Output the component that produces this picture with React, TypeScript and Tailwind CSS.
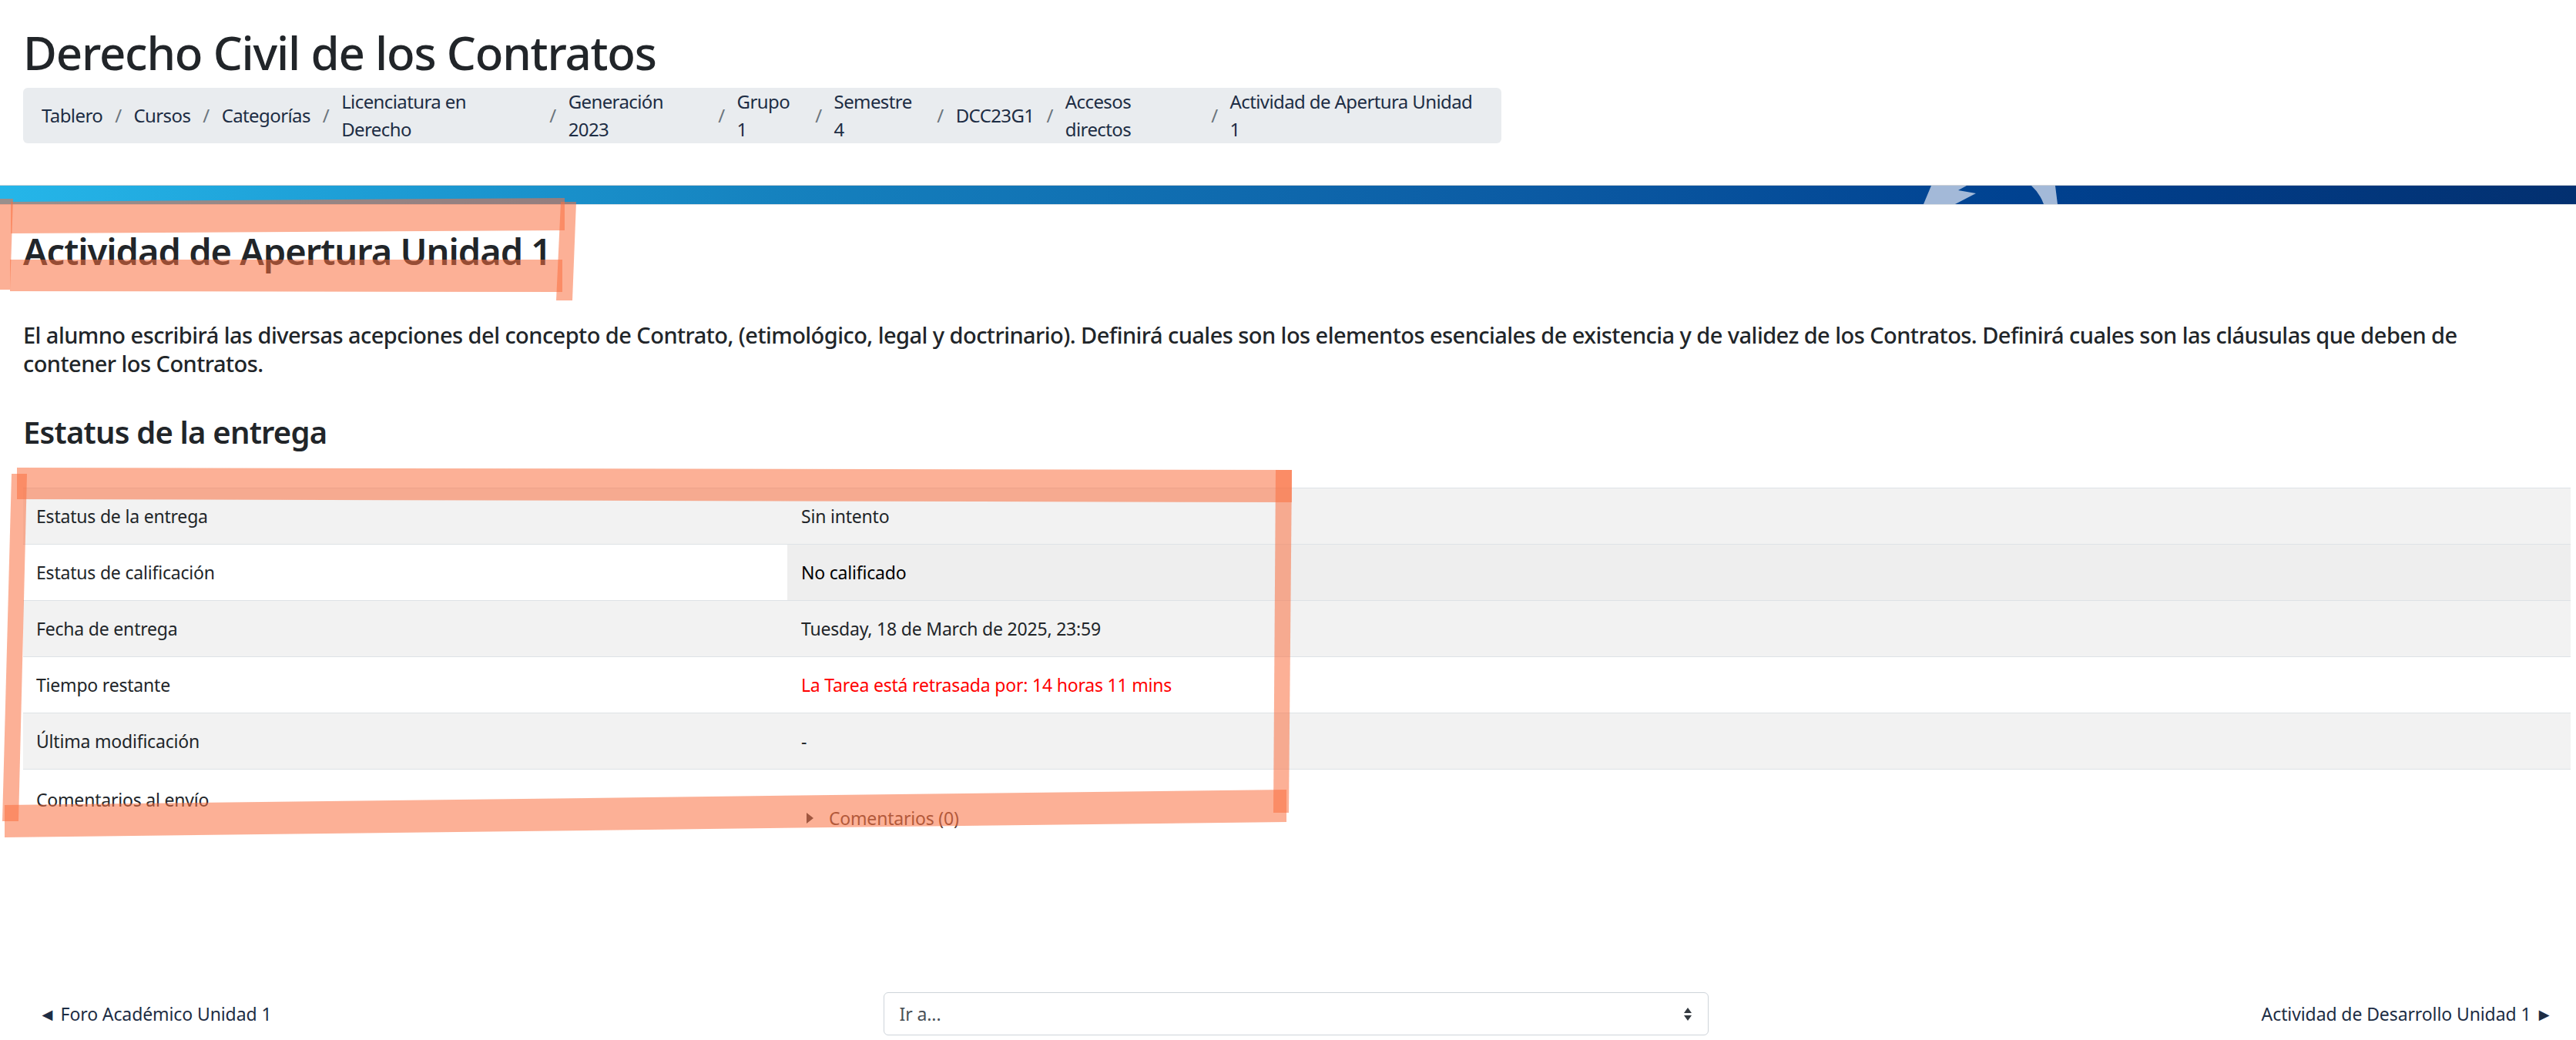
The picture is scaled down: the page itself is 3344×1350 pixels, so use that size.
const font = "font-['Noto_Sans','Open_Sans',sans-serif]";

const crumbs = [
  "Tablero",
  "Cursos",
  "Categorías",
  "Licenciatura en Derecho",
  "Generación 2023",
  "Grupo 1",
  "Semestre 4",
  "DCC23G1",
  "Accesos directos",
  "Actividad de Apertura Unidad 1",
];

const rows = [
  { label: "Estatus de la entrega", value: "Sin intento", striped: true },
  { label: "Estatus de calificación", value: "No calificado", shaded: true },
  { label: "Fecha de entrega", value: "Tuesday, 18 de March de 2025, 23:59", striped: true },
  { label: "Tiempo restante", value: "La Tarea está retrasada por: 14 horas 11 mins", late: true },
  { label: "Última modificación", value: "-", striped: true },
];

// hand drawn highlight marks lying over the page
const marks = [
  "14,262 733,257 733,299 14,303",
  "0,258 17,258 13,376 0,376",
  "728,262 748,262 743,390 722,390",
  "13,337 730,337 730,379 13,378",
  "22,607 1677,610 1677,652 22,648",
  "15,615 35,615 24,1066 3,1066",
  "6,1045 1670,1025 1670,1067 6,1087",
  "1656,610 1677,610 1673,1055 1653,1055",
];

export default function App() {
  return (
    <div className={`relative h-[1350px] overflow-hidden bg-white text-[#212529] ${font}`}>
      <header className="px-[30px] pt-[33px]">
        <h1 className="text-[60px] leading-[70px] font-medium tracking-[-1.2px]">Derecho Civil de los Contratos</h1>
        <nav className="mt-[11px] flex h-[72px] w-[1919px] items-center gap-[16px] rounded-[6px] bg-[#e9ecef] px-[24px] text-[24px] tracking-[-0.6px] text-[#1d2d44]">
          {crumbs.map((c, i) => (
            <span key={c} className="flex items-center gap-[16px]">
              {i > 0 && <span className="text-[#6c757d]">/</span>}
              {c}
            </span>
          ))}
        </nav>
      </header>

      <div className="relative mt-[54px] h-[26px] border-y border-t-[#cfd4d8] border-b-[#dee2e6] bg-[linear-gradient(90deg,#25b6e9_0%,#1582bf_30%,#0b5aa3_60%,#004291_78%,#033070_100%)]">
        <svg className="absolute top-0 left-[2470px]" width="220" height="24" viewBox="0 0 220 24">
          <path d="M37 0H83L72 6L95 10L68 24H27Z" fill="#a3b9d8" />
          <path d="M167 0H198L201 24H183Q178 10 167 0Z" fill="#a3b9d8" />
        </svg>
      </div>

      <main className="px-[30px]">
        <h2 className="mt-[32px] text-[47px] leading-[56px] font-semibold tracking-[-1px]">Actividad de Apertura Unidad 1</h2>
        <p className="mt-[62px] text-[29px] leading-[37px] font-medium tracking-[-0.55px]">
          El alumno escribirá las diversas acepciones del concepto de Contrato, (etimológico, legal y doctrinario). Definirá cuales son los elementos esenciales de existencia y de validez de los Contratos. Definirá cuales son las cláusulas que deben de contener los Contratos.
        </p>
        <h3 className="mt-[47px] text-[40px] leading-[48px] font-semibold tracking-[-0.8px]">Estatus de la entrega</h3>

        <table className="mt-[48px] w-[3307px] table-fixed border-collapse text-[23px] tracking-[-0.2px]">
          <colgroup>
            <col className="w-[992px]" />
            <col />
          </colgroup>
          <tbody>
            {rows.map((r) => (
              <tr key={r.label} className={`h-[73px] border-y border-[#dee2e6] ${r.striped ? "bg-[#f2f2f2]" : ""}`}>
                <td className="px-[17px]">{r.label}</td>
                <td className={`px-[18px] ${r.late ? "text-[#ff0000]" : ""} ${r.shaded ? "bg-[#eeeeee] text-black" : ""}`}>{r.value}</td>
              </tr>
            ))}
            <tr className="h-[73px] align-top">
              <td className="px-[17px] pt-[22px]">Comentarios al envío</td>
              <td className="px-[18px] pt-[46px] text-[#5c4036]">
                <span className="flex items-center gap-[20px] pl-[7px]">
                  <svg width="9" height="14" viewBox="0 0 9 14">
                    <path d="M0 0L9 7L0 14Z" fill="#343a40" />
                  </svg>
                  Comentarios (0)
                </span>
              </td>
            </tr>
          </tbody>
        </table>
      </main>

      <footer className="absolute right-[30px] bottom-[6px] left-[50px] grid h-[56px] grid-cols-[1fr_1071px_1fr] items-center text-[23px] tracking-[-0.1px] text-[#1d2d44]">
        <span>◄ Foro Académico Unidad 1</span>
        <div className="flex h-[56px] items-center justify-between rounded-[6px] border border-[#ced4da] px-[20px] text-[#495057]">
          <span>Ir a...</span>
          <svg width="12" height="20" viewBox="0 0 12 20">
            <path d="M6 2L11 9H1Z M1 12H11L6 19Z" fill="#343a40" />
          </svg>
        </div>
        <span className="text-right">Actividad de Desarrollo Unidad 1 ►</span>
      </footer>

      <svg className="pointer-events-none absolute inset-0" width="3344" height="1350" viewBox="0 0 3344 1350">
        {marks.map((m) => (
          <polygon key={m} points={m} fill="#f97040" fillOpacity="0.55" />
        ))}
      </svg>
    </div>
  );
}
